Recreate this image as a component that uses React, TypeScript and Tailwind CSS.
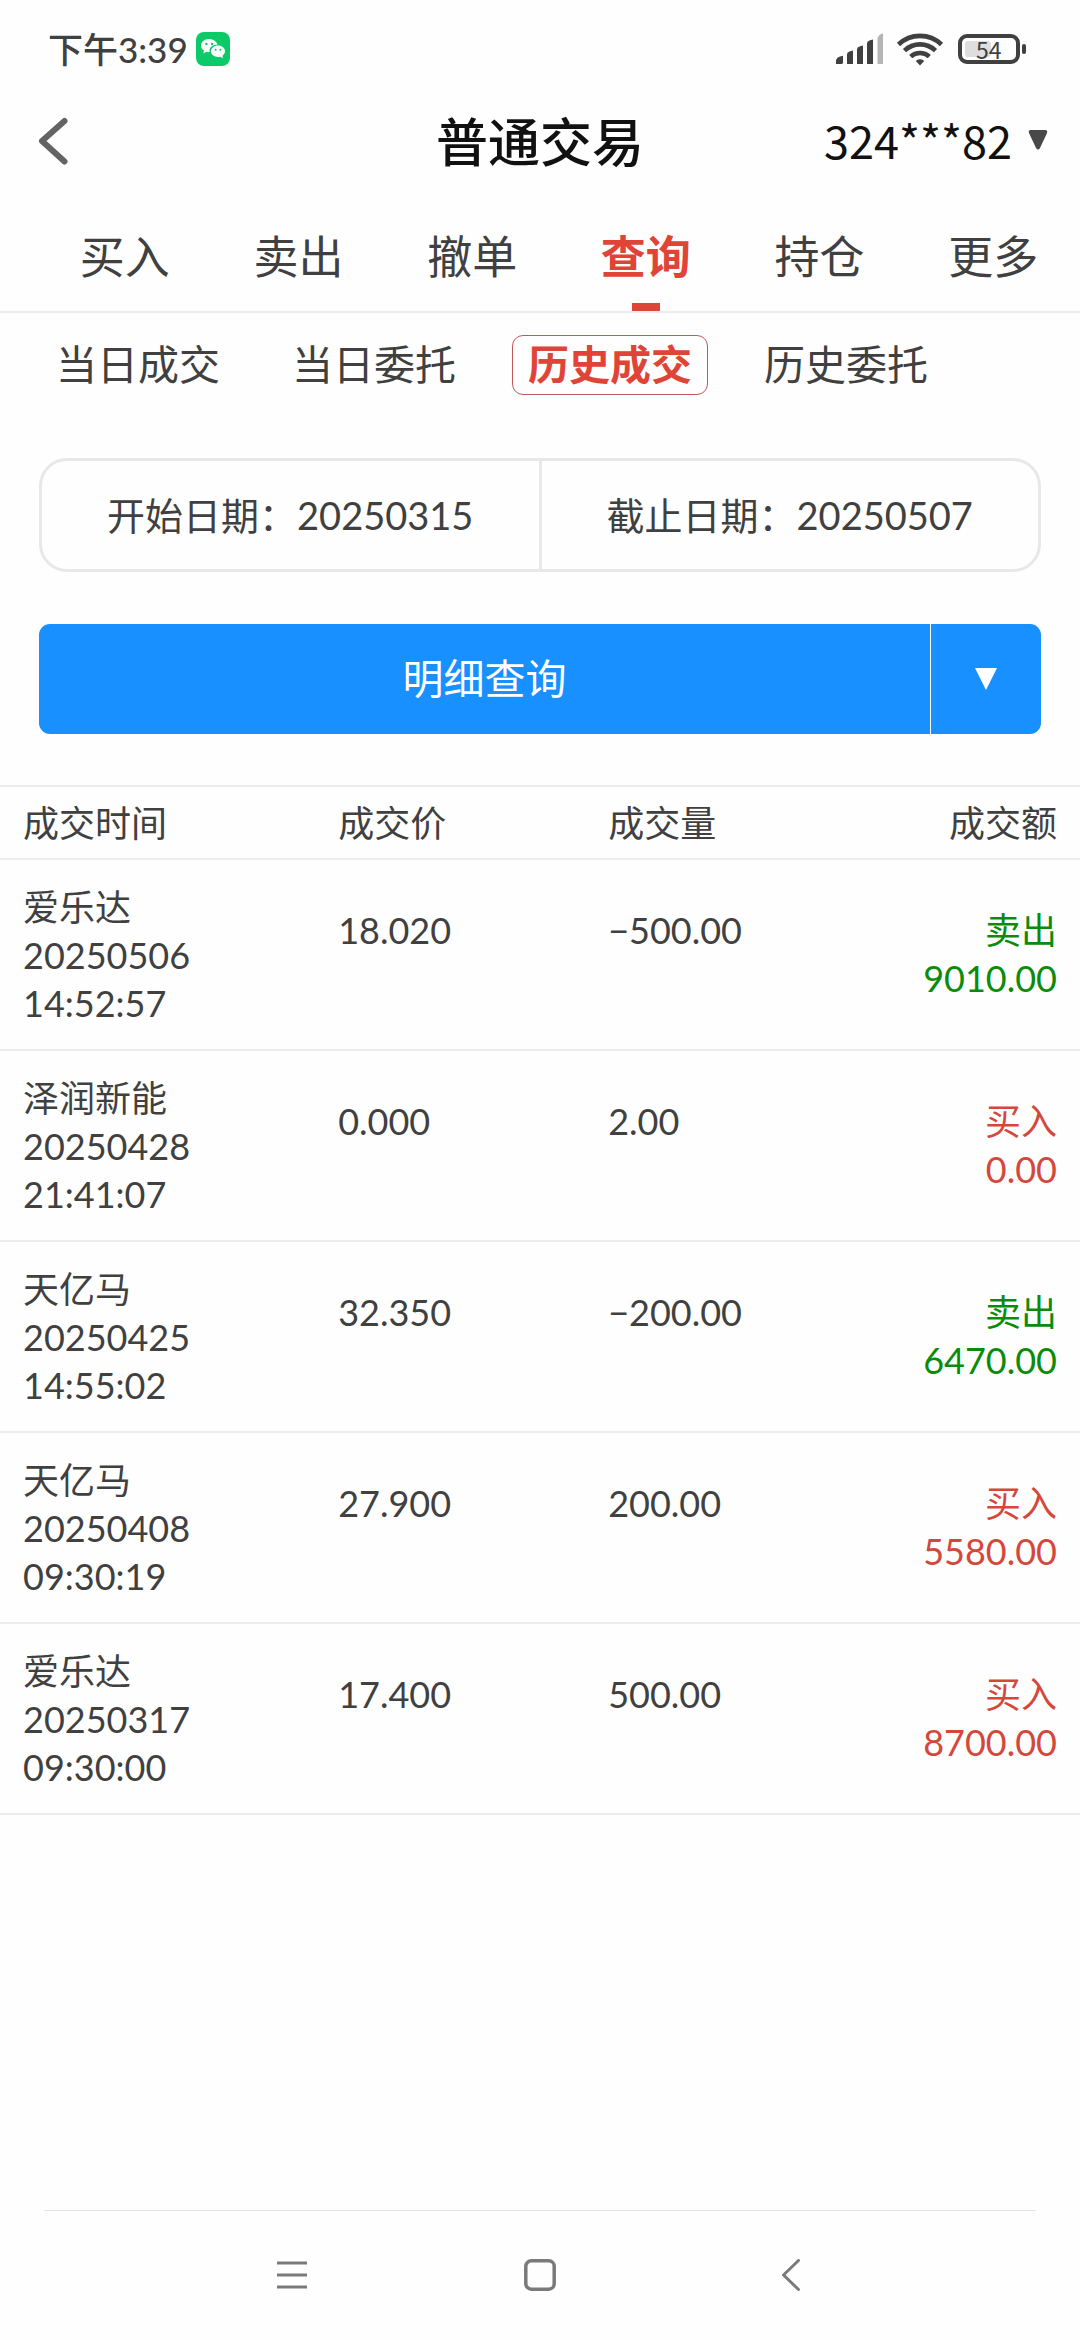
import { FC } from 'react';

interface Trade {
  name: string;
  date: string;
  time: string;
  price: string;
  volume: string;
  side: '买入' | '卖出';
  amount: string;
}

const tabs = ['买入', '卖出', '撤单', '查询', '持仓', '更多'];
const subTabs = ['当日成交', '当日委托', '历史成交', '历史委托'];

const trades: Trade[] = [
  { name: '爱乐达', date: '20250506', time: '14:52:57', price: '18.020', volume: '−500.00', side: '卖出', amount: '9010.00' },
  { name: '泽润新能', date: '20250428', time: '21:41:07', price: '0.000', volume: '2.00', side: '买入', amount: '0.00' },
  { name: '天亿马', date: '20250425', time: '14:55:02', price: '32.350', volume: '−200.00', side: '卖出', amount: '6470.00' },
  { name: '天亿马', date: '20250408', time: '09:30:19', price: '27.900', volume: '200.00', side: '买入', amount: '5580.00' },
  { name: '爱乐达', date: '20250317', time: '09:30:00', price: '17.400', volume: '500.00', side: '买入', amount: '8700.00' },
];

const StatusBar: FC = () => (
  <div className="flex h-[98px] items-center justify-between pl-12 pr-[54px]">
    <div className="flex items-center gap-2">
      <span className="text-[35px] font-medium leading-10">下午3:39</span>
      <svg className="h-[34px] w-[34px]" viewBox="0 0 34 34" aria-hidden="true">
        <rect width="34" height="34" rx="8" fill="#0acb68" />
        <path
          d="M13 7C8.600 7 5 9.900 5 13.500c0 2.100 1.200 3.900 3 5.100L7.300 21.500l3.200-1.700c.8.200 1.600.3 2.500.3h.7c-.1-.5-.2-1-.2-1.500 0-3.300 3.200-5.900 7.200-5.900h.7C20.800 9.500 17.300 7 13 7z"
          fill="#fff"
        />
        <path
          d="M29 19.300c0-3.200-3.100-5.700-7-5.700s-7 2.500-7 5.700 3.100 5.700 7 5.700c.8 0 1.600-.1 2.300-.3l2.700 1.500-.6-2.400c1.600-1.100 2.600-2.700 2.600-4.500z"
          fill="#fff"
        />
        <g fill="#0acb68">
          <circle cx="10.400" cy="12" r="1.200" />
          <circle cx="16" cy="12" r="1.200" />
          <circle cx="19.600" cy="17.800" r="1" />
          <circle cx="24.400" cy="17.800" r="1" />
        </g>
      </svg>
    </div>
    <div className="flex items-center">
      <svg className="h-8 w-12" viewBox="0 0 48 32" fill="#404040" aria-hidden="true">
        <path d="M0 31V27q1-3 4-3.500l3-.8V30l-1 1z" />
        <path d="M11 31V21q1-2 3-2.700l3-.8V31z" />
        <path d="M21 31V16q1-2 3-2.700l3-.8V31z" />
        <path d="M31 31V10q1-2 3-2.700l3-.8V31z" />
        <path d="M41.500 31V5q1-3 3.500-4l2-.8V31z" fill="#b5b5b5" />
      </svg>
      <svg className="ml-3 h-[34px] w-12" viewBox="0 0 48 34" fill="none" stroke="#404040" strokeWidth="4.600" aria-hidden="true">
        <path d="M2.500 12.500a31 31 0 0 1 43 0" />
        <path d="M8.500 18.600a22.500 22.500 0 0 1 31 0" />
        <path d="M14.700 24.600a13.800 13.800 0 0 1 18.600 0" />
        <path d="M24 27.200q3 0 4.200 1.800L24 33.500 19.800 29q1.200-1.800 4.200-1.800z" fill="#404040" stroke="none" />
      </svg>
      <div className="ml-[14px] flex h-[30px] w-[62px] items-center rounded-[9px] border-4 border-[#404040] px-[3px]">
        <div className="h-4 w-[26px] rounded-[3px] bg-[#dedede]" />
        <span className="-ml-[15px] font-['Noto_Sans_CJK_SC'] text-[23px] leading-[22px]">54</span>
      </div>
      <div className="ml-[2px] h-[10px] w-1 rounded-full bg-[#404040]" />
    </div>
  </div>
);

const Header: FC = () => (
  <header className="grid h-[88px] grid-cols-3 items-center px-8">
    <button type="button" aria-label="返回" className="justify-self-start pb-[2px] pl-[6px]">
      <svg className="h-12 w-[30px]" viewBox="0 0 30 48" fill="none" stroke="#636363" strokeWidth="6" strokeLinecap="round" strokeLinejoin="round">
        <path d="M26.500 4 4 24l22.500 20.500" />
      </svg>
    </button>
    <h1 className="justify-self-center whitespace-nowrap text-[52px] font-medium leading-[60px] text-[#111]">普通交易</h1>
    <button type="button" className="flex items-center gap-4 justify-self-end pb-1 text-[#111]">
      <span className="font-['Noto_Sans_CJK_SC'] text-[45px] leading-[56px]">324***82</span>
      <svg className="h-5 w-5" viewBox="0 0 20 20" fill="#484848" aria-hidden="true">
        <path d="M2.500 0h15Q20 0.300 19 3l-7 15q-2 3-4 0L1 3Q0 .3 2.500 0z" />
      </svg>
    </button>
  </header>
);

const TradeRow: FC<Trade> = ({ name, date, time, price, volume, side, amount }) => (
  <tr className="border-b-2 border-[#ededed] align-top">
    <td className="pb-[22px] pl-[23px] pt-[23px]">
      <div>{name}</div>
      <div>{date}</div>
      <div>{time}</div>
    </td>
    <td className="pl-[25px] pt-[46px]">{price}</td>
    <td className="pl-[25px] pt-[46px]">{volume}</td>
    <td className={side === '卖出' ? 'pr-[23px] pt-[46px] text-right text-[#0a8c0a]' : 'pr-[23px] pt-[46px] text-right text-[#d4483c]'}>
      <div>{side}</div>
      <div>{amount}</div>
    </td>
  </tr>
);

const App: FC = () => {
  const activeTab = '查询';
  const activeSubTab = '历史成交';

  return (
    <div className="flex min-h-screen flex-col bg-[#fefefe] font-['Lato','Noto_Sans_CJK_SC',sans-serif] text-[#404040]">
      <StatusBar />
      <Header />

      {/* Main tabs */}
      <nav className="grid h-[127px] grid-cols-6 border-b-2 border-[#ebebeb] pl-[38px]">
        {tabs.map((tab) => (
          <button
            key={tab}
            type="button"
            className={
              tab === activeTab
                ? 'flex flex-col items-center justify-between pt-[41px] text-[45px] font-bold leading-[60px] text-[#e04438]'
                : 'flex flex-col items-center justify-between pt-[41px] text-[45px] leading-[60px]'
            }
          >
            {tab}
            {tab === activeTab && <span className="h-2 w-7 bg-[#e04438]" />}
          </button>
        ))}
      </nav>

      <nav className="flex gap-10 pl-10 pt-[22px]">
        {subTabs.map((tab) => (
          <button
            key={tab}
            type="button"
            className={
              tab === activeSubTab
                ? 'h-[60px] rounded-[11px] border border-[#c0575a] px-[15px] text-[41px] font-bold leading-[58px] text-[#e04438]'
                : 'h-[60px] border border-transparent px-[15px] text-[41px] leading-[58px]'
            }
          >
            {tab}
          </button>
        ))}
      </nav>

      <div className="mx-[39px] mt-[63px] flex h-[114px] rounded-[28px] border-[3px] border-[#e8e8e8] text-[38px]">
        <button type="button" className="flex-1 border-r-[3px] border-[#e8e8e8]">
          开始日期：20250315
        </button>
        <button type="button" className="flex-1">
          截止日期：20250507
        </button>
      </div>

      <div className="mx-[39px] mt-[52px] flex h-[110px] overflow-hidden rounded-[11px] bg-[#1890ff] text-white">
        <button type="button" className="flex-1 text-[41px]">
          明细查询
        </button>
        <button type="button" aria-label="展开" className="flex w-[111px] items-center justify-center border-l border-white">
          <svg className="h-[22px] w-[22px]" viewBox="0 0 22 22" fill="#fff">
            <path d="M0 0h22L11 22z" />
          </svg>
        </button>
      </div>

      {/* Trade history */}
      <table className="mt-[51px] w-full table-fixed text-[36px] leading-[48px]">
        <thead>
          <tr className="h-[73px] border-y-2 border-[#ededed] text-left">
            <th className="w-[29%] pl-[23px] font-normal">成交时间</th>
            <th className="w-1/4 pl-[25px] font-normal">成交价</th>
            <th className="w-1/4 pl-[25px] font-normal">成交量</th>
            <th className="pr-[23px] text-right font-normal">成交额</th>
          </tr>
        </thead>
        <tbody>
          {trades.map((trade) => (
            <TradeRow key={trade.date} {...trade} />
          ))}
        </tbody>
      </table>

      {/* System navigation */}
      <footer className="mx-11 mt-auto grid h-[130px] grid-cols-[1fr_188px_1fr] items-center border-t border-[#e3e3e3] pb-[2px]">
        <button type="button" aria-label="最近任务" className="mr-[138px] justify-self-end">
          <svg className="h-8 w-8" viewBox="0 0 32 32" stroke="#7a7a7a" strokeWidth="3">
            <path d="M1 4h30M1 16h30M1 28h30" />
          </svg>
        </button>
        <button type="button" aria-label="主屏幕" className="justify-self-center">
          <svg className="h-8 w-8" viewBox="0 0 32 32" fill="none" stroke="#7a7a7a" strokeWidth="3.500">
            <rect x="1.800" y="1.800" width="28.400" height="28.400" rx="5.500" />
          </svg>
        </button>
        <button type="button" aria-label="后退" className="ml-[147px] justify-self-start">
          <svg className="h-8 w-5" viewBox="0 0 20 32" fill="none" stroke="#7a7a7a" strokeWidth="3" strokeLinecap="round" strokeLinejoin="round">
            <path d="M17.500 1.500 2.500 16l15 14.500" />
          </svg>
        </button>
      </footer>
    </div>
  );
};

export default App;
